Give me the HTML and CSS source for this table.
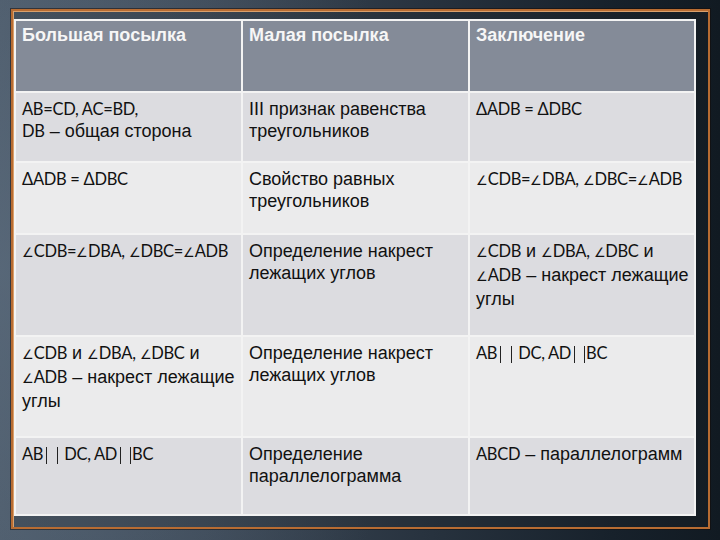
FILE: index.html
```html
<!DOCTYPE html>
<html lang="ru">
<head>
<meta charset="utf-8">
<title>Посылки</title>
<link rel="stylesheet" href="styles.css">
</head>
<body>
<div class="frame">
  <div class="grid">
    <div class="cell head">Большая посылка</div>
    <div class="cell head">Малая посылка</div>
    <div class="cell head">Заключение</div>

    <div class="cell dark"><span class="m">AB=CD, AC=BD,</span><br><span class="m">DB</span> – общая сторона</div>
    <div class="cell dark">III признак равенства треугольников</div>
    <div class="cell dark"><span class="m">ΔADB = ΔDBC</span></div>

    <div class="cell light"><span class="m">ΔADB = ΔDBC</span></div>
    <div class="cell light">Свойство равных треугольников</div>
    <div class="cell light nw"><span class="m"><span class="ang">∠</span>CDB=<span class="ang">∠</span>DBA, <span class="ang">∠</span>DBC=<span class="ang">∠</span>ADB</span></div>

    <div class="cell dark nw"><span class="m"><span class="ang">∠</span>CDB=<span class="ang">∠</span>DBA, <span class="ang">∠</span>DBC=<span class="ang">∠</span>ADB</span></div>
    <div class="cell dark">Определение накрест лежащих углов</div>
    <div class="cell dark nw"><span class="m"><span class="ang">∠</span>CDB</span> и <span class="m"><span class="ang">∠</span>DBA, <span class="ang">∠</span>DBC</span> и<br><span class="m"><span class="ang">∠</span>ADB</span> – накрест лежащие<br>углы</div>

    <div class="cell light nw"><span class="m"><span class="ang">∠</span>CDB</span> и <span class="m"><span class="ang">∠</span>DBA, <span class="ang">∠</span>DBC</span> и<br><span class="m"><span class="ang">∠</span>ADB</span> – накрест лежащие<br>углы</div>
    <div class="cell light">Определение накрест лежащих углов</div>
    <div class="cell light nw"><span class="m">AB<span class="par wide"></span> DC, AD<span class="par"></span>BC</span></div>

    <div class="cell dark nw"><span class="m">AB<span class="par wide"></span> DC, AD<span class="par"></span>BC</span></div>
    <div class="cell dark">Определение параллелограмма</div>
    <div class="cell dark nw"><span class="m">ABCD</span> – параллелограмм</div>
  </div>
</div>
</body>
</html>
```
FILE: styles.css
```css
html, body {
  margin: 0;
  padding: 0;
  height: 540px;
  overflow: hidden;
}
body {
  width: 720px;
  background:
    radial-gradient(ellipse 420px 560px at 0% 50%, rgba(95,112,130,0.6), rgba(95,112,130,0) 100%),
    linear-gradient(90deg, #4b5968 0%, #3b4755 30%, #27323e 60%, #17212b 85%, #111a22 100%);
  font-family: "Liberation Sans", Arial, sans-serif;
  overflow: hidden;
}
.frame {
  margin: 9px 0 0 11px;
  width: 682px;
  height: 497px;
  border: 2px solid #b86c32;
  box-shadow: inset 1px 1px 0 #d9a06c, 0 0 0 1px rgba(20,10,5,0.5);
  padding: 8px 12px 11px 1px;
  box-sizing: content-box;
  background: rgba(30,34,40,0.25);
}
.grid {
  display: grid;
  grid-template-columns: 225px 225px 224px;
  grid-template-rows: 70px 68px 70px 100px 99px 76px;
  gap: 2px;
  padding: 2px;
  background: #f3f3f3;
  width: 678px;
}
.cell {
  padding: 5px 6px 0 6px;
  font-size: 18px;
  line-height: 22px;
  color: #111;
}
.cell.nw {
  white-space: nowrap;
}
.cell.head {
  background: #848b98;
  color: #f6f6f6;
  font-weight: bold;
  padding-top: 3px;
}
.cell.dark {
  background: #dcdce0;
}
.cell.light {
  background: #ebebec;
}
.m {
  font-family: Lato, "DejaVu Sans", sans-serif;
  font-size: 16.5px;
  letter-spacing: -0.3px;
}
.ang {
  font-family: "DejaVu Sans", sans-serif;
  font-size: 13px;
  font-weight: 200;
}
.par {
  display: inline-block;
  width: 9px;
  height: 17px;
  border-left: 1px solid #222;
  border-right: 1px solid #222;
  margin: 0 1px 0 3px;
  vertical-align: -4px;
}
.par.wide {
  width: 10px;
  margin-right: 2px;
}
```
